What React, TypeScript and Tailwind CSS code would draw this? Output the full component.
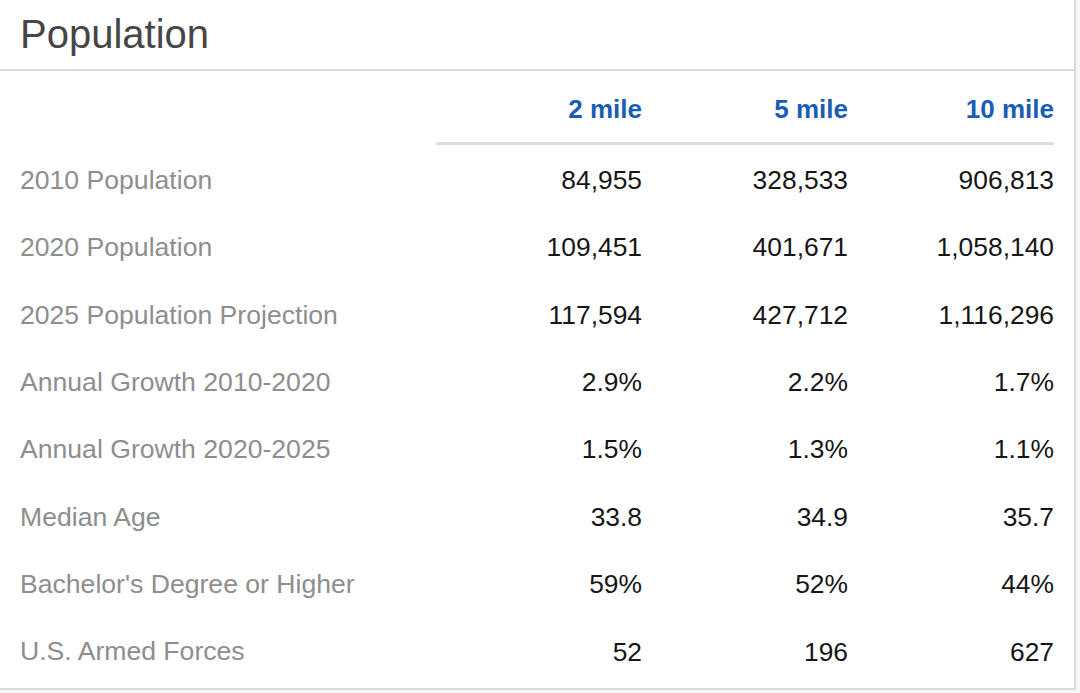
const rows: [string, string, string, string][] = [
  ["2010 Population", "84,955", "328,533", "906,813"],
  ["2020 Population", "109,451", "401,671", "1,058,140"],
  ["2025 Population Projection", "117,594", "427,712", "1,116,296"],
  ["Annual Growth 2010-2020", "2.9%", "2.2%", "1.7%"],
  ["Annual Growth 2020-2025", "1.5%", "1.3%", "1.1%"],
  ["Median Age", "33.8", "34.9", "35.7"],
  ["Bachelor's Degree or Higher", "59%", "52%", "44%"],
  ["U.S. Armed Forces", "52", "196", "627"],
];

const radii = ["2 mile", "5 mile", "10 mile"];

export default function App() {
  return (
    <div
      className="h-[693px] w-[1080px] bg-[#f7f7f7]"
      style={{ fontFamily: '"Liberation Sans", Arial, sans-serif' }}
    >
      <div className="h-[690px] w-[1076px] border-r-2 border-b-2 border-[#dadada] bg-white">
        <div className="flex h-[71px] items-center border-b-2 border-[#d9d9d9] px-5 pb-[2px]">
          <h1 className="text-[40px] leading-none text-[#464646]">Population</h1>
        </div>

        <div className="grid grid-cols-[1fr_206px_206px_206px] px-5">
          <div className="h-[71px]" />
          {radii.map((r) => (
            <div
              key={r}
              className="flex h-[71px] items-end justify-end pb-[18px] text-[26px] font-bold leading-[30px] text-[#1a5db5]"
            >
              {r}
            </div>
          ))}

          <div />
          <div className="col-span-3 mb-[2px] h-[3px] bg-[#dcdcdc]" />

          {rows.map(([label, a, b, c]) => (
            <div key={label} className="contents">
              <div className="flex h-[67.4px] items-center text-[26.6px] text-[#8e8e8e]">
                {label}
              </div>
              {[a, b, c].map((v, i) => (
                <div
                  key={i}
                  className="flex h-[67.4px] items-center justify-end text-[26.4px] text-[#161616]"
                >
                  {v}
                </div>
              ))}
            </div>
          ))}
        </div>
      </div>
    </div>
  );
}
